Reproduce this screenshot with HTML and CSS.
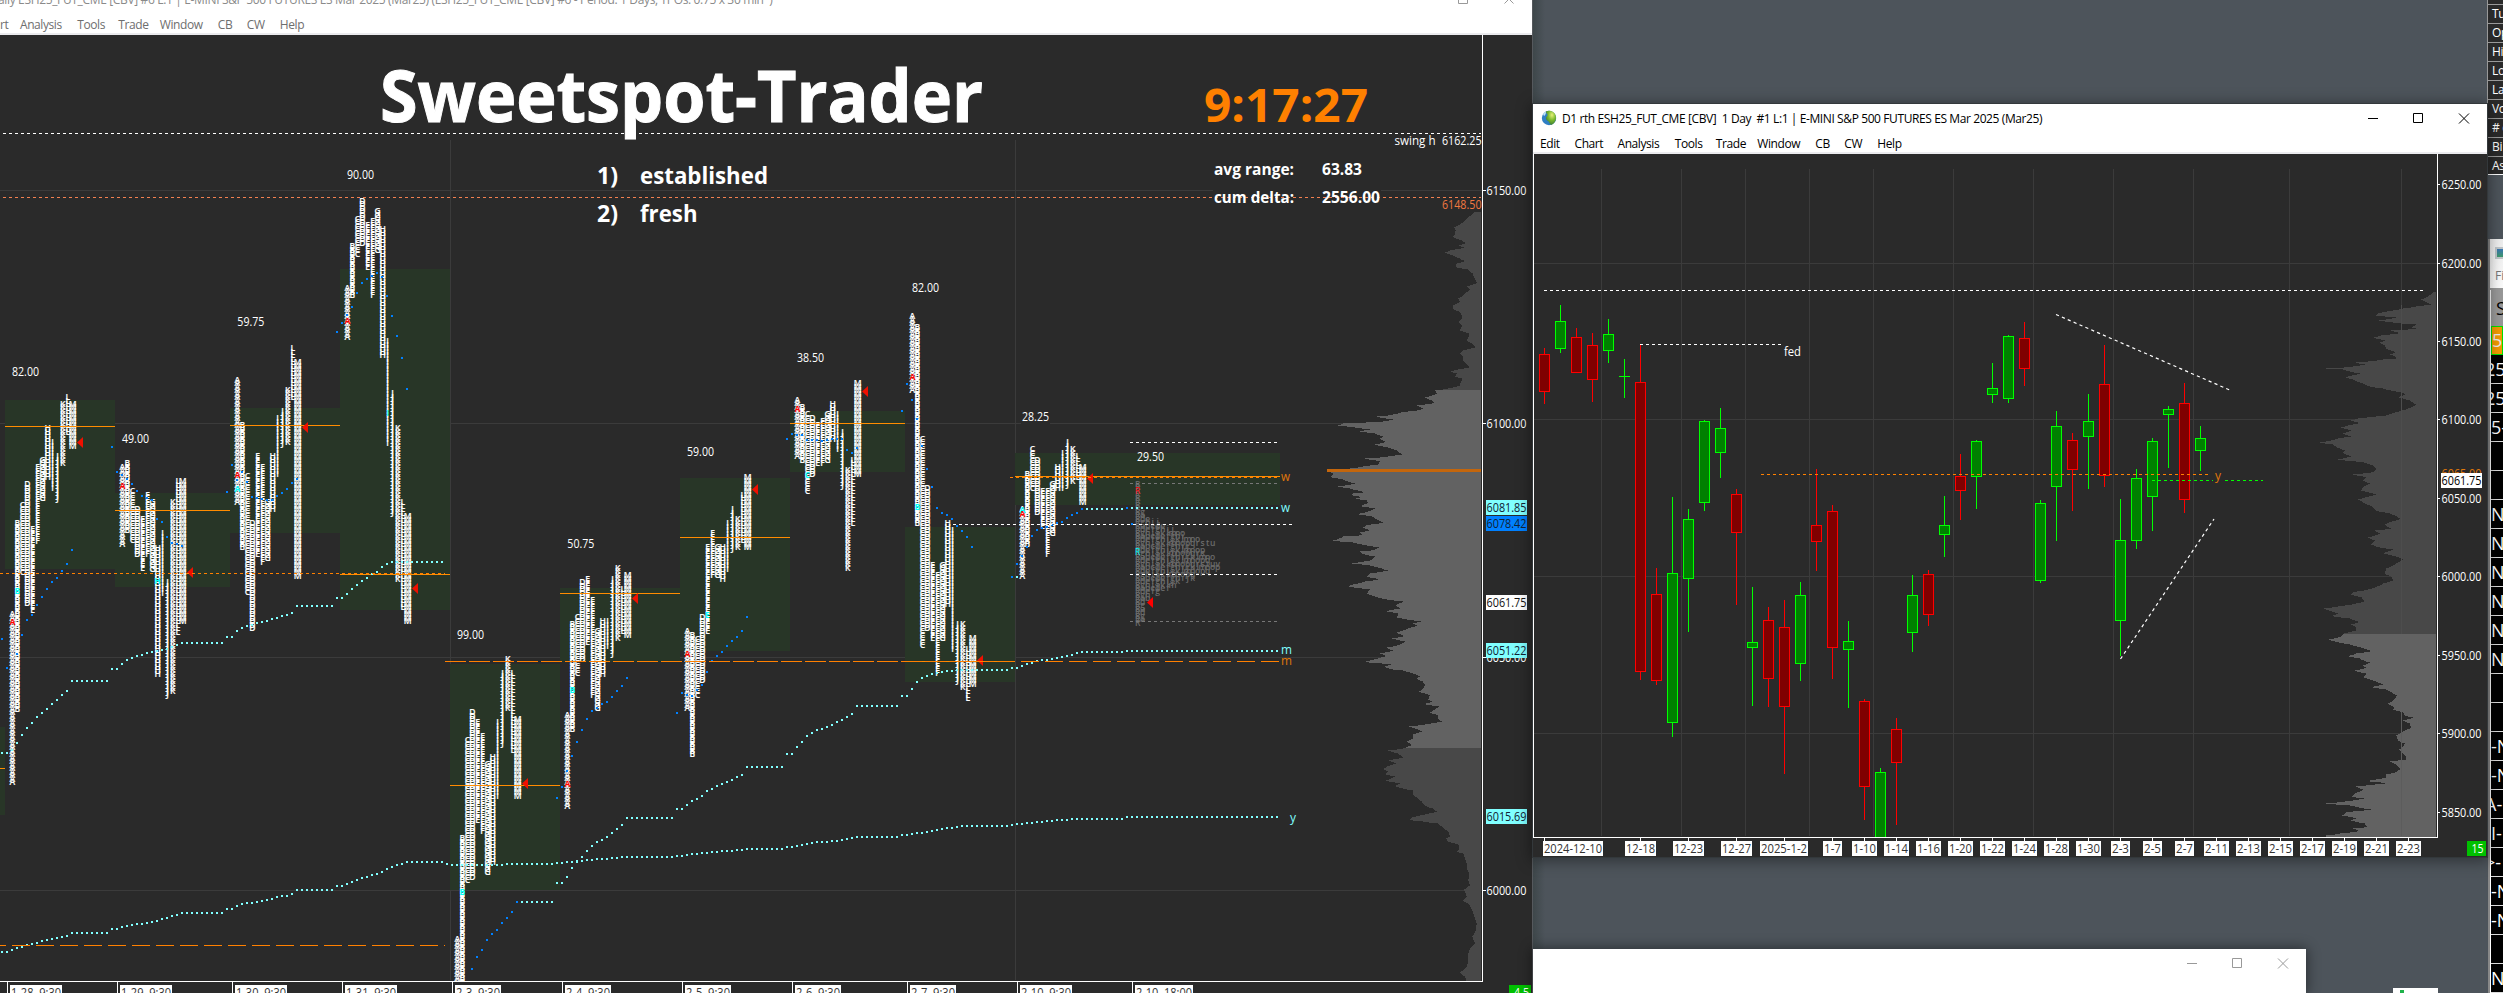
FILE: index.html
```html
<!DOCTYPE html>
<html lang="en">
<head>
<meta charset="utf-8">
<title>Sweetspot-Trader</title>
<link rel="stylesheet" href="styles.css">
</head>
<body>
<main class="desktop">
  <section class="window window-profile">
    <header class="titlebar titlebar-cut">
      <span class="title title-muted">ally ESH25_FUT_CME [CBV] #6 L:1 | E-MINI S&amp;P 500 FUTURES ES Mar 2025 (Mar25) (ESH25_FUT_CME [CBV] #6 - Period: 1 Days, TPOs: 0.75 x 30 min&nbsp; )</span>
      <svg class="controls controls-cut" width="56" height="10" viewBox="0 0 56 10"><path d="M.5 0V9.5H9.5V0M46.5 9.5L51 5 55.500 9.500M51 5L46 0M51 5L56 0"/></svg>
    </header>
    <nav class="menu menu-muted"><span class="m-rt">rt</span><span class="m-analysis">Analysis</span><span class="m-tools">Tools</span><span class="m-trade">Trade</span><span class="m-window">Window</span><span class="m-cb">CB</span><span class="m-cw">CW</span><span>Help</span></nav>
    <svg class="chart" id="profile" width="1532" height="958" viewBox="0 35 1532 958"></svg>
  </section>
  <div class="middle">
    <section class="window window-daily">
      <header class="titlebar">
        <svg class="globe" width="16" height="16" viewBox="0 0 16 16"><defs><radialGradient id="g" cx=".6" cy=".3" r=".8"><stop offset="0" stop-color="#e6f07a"/><stop offset=".45" stop-color="#7dbb2d"/><stop offset="1" stop-color="#2a6a3a"/></radialGradient></defs><circle cx="8" cy="8" r="7.200" fill="#2f7fc4"/><path d="M5 1.500C9-.5 15 2 15 8c0 3-2 6-5 7-2-1-1-3-3-4S4 8 6 6 4 3 5 1.500Z" fill="url(#g)"/><path d="M2 4c1-2 3-2 3-2s0 3-2 4Z" fill="#bfe2f5"/></svg>
        <span class="title">D1 rth ESH25_FUT_CME [CBV]&nbsp; 1 Day&nbsp; #1 L:1 | E-MINI S&amp;P 500 FUTURES ES Mar 2025 (Mar25)</span>
        <svg class="controls" width="102" height="11" viewBox="0 0 102 11"><path d="M0 5.500H10M45.500.5H54.500V9.500H45.500ZM91 .5L101 10.500M101 .5L91 10.500"/></svg>
      </header>
      <nav class="menu menu-daily"><span class="m-edit">Edit</span><span class="m-chart">Chart</span><span class="m-analysis">Analysis</span><span class="m-tools">Tools</span><span class="m-trade">Trade</span><span class="m-window">Window</span><span class="m-cb">CB</span><span class="m-cw">CW</span><span>Help</span></nav>
      <svg class="chart" id="daily" width="954" height="703" viewBox="1533 154 954 703"></svg>
    </section>
    <section class="window window-blank">
      <svg class="controls controls-muted" width="102" height="11" viewBox="0 0 102 11"><path d="M0 5.500H10M45.500.5H54.500V9.500H45.500ZM91 .5L101 10.500M101 .5L91 10.500"/></svg>
    </section>
    <div class="window-peek"><i></i></div>
  </div>
  <aside class="edge">
    <div class="stats"><b>Tu</b><b>Op</b><b>Hi</b><b>Lo</b><b>La</b><b>Vo</b><b># o</b><b>Bi</b><b>As</b></div>
    <div class="list-window">
      <div class="list-head"><i class="list-icon"></i><span>Fi</span></div>
      <div class="list" id="list"></div>
    </div>
  </aside>
</main>
<script src="charts.js"></script>
</body>
</html>
```
FILE: styles.css
```css
* { box-sizing: border-box; }
body { margin: 0; overflow: hidden; background: #4d545b; font-family: "Open Sans", "Noto Sans", sans-serif; font-size: 12px; }
.desktop { display: grid; grid-template-columns: 1533px 954px 16px; width: 2503px; height: 993px; overflow: hidden; background: #4d545b; }
.window { background: #fff; }
.window-profile { height: 993px; border-right: 1px solid #55595d; overflow: hidden; }
.middle { position: relative; display: flex; flex-direction: column; padding-top: 104px; background: linear-gradient(90deg, #3e474a, #4d545b 12px); }
.window-daily { position: relative; width: 954px; height: 753px; box-shadow: 0 0 0 1px #33383b, 0 2px 14px 2px rgba(0, 0, 0, .4); }
.window-blank { display: flex; justify-content: flex-end; width: 773px; height: 44px; margin-top: 92px; padding: 9px 17px 0 0; box-shadow: 0 0 12px 1px rgba(0, 0, 0, .45); }
.window-peek { position: absolute; left: 860px; top: 988px; width: 45px; height: 5px; background: #fff; }
.window-peek i { display: block; width: 4px; height: 3px; margin: 2px 0 0 7px; background: #1fb24a; }

.titlebar { display: flex; align-items: center; height: 30px; padding: 0 17px 0 9px; color: #000; white-space: nowrap; }
.title { font-size: 12px; letter-spacing: -.4px; line-height: 16px; }
.titlebar .title { flex: 1; }
.globe { margin: -2px 5px 0 -1px; }
.titlebar-cut { height: 16px; padding: 0 18px 0 0; align-items: flex-start; }
.title-muted { margin: -8px 0 0 -2px; color: #8a8a8a; letter-spacing: -.35px; }
.controls { fill: none; stroke: #000; stroke-width: 1; margin-top: -2px; }
.controls-muted { stroke: #999; margin-top: 0; }
.controls-cut { stroke: #999; margin-top: -6px; }
.menu { display: flex; height: 20px; padding: 0 0 0 7px; border-bottom: 2px solid #ebebee; line-height: 18px; letter-spacing: -.42px; white-space: nowrap; color: #000; }
.menu-daily { line-height: 20px; }
.menu-muted { height: 19px; padding-left: 0; color: #6e6e6e; line-height: 18px; }
.m-rt { width: 20px; }
.m-edit { width: 34.500px; }
.m-chart { width: 43px; }
.m-analysis { width: 57.300px; }
.m-tools { width: 41px; }
.m-trade { width: 41.500px; }
.m-window { width: 58px; }
.m-cb { width: 29px; }
.m-cw { width: 33px; }
.chart { display: block; background: #2a2a2a; }
.chart text { font-family: "Open Sans", "Noto Sans", sans-serif; }
.chart .tpo { font-size: 8.500px; text-anchor: middle; }
.chart .session { font-weight: 600; stroke: #fff; stroke-width: .15px; }
.chart .headline { stroke: #fff; stroke-width: 1px; }

.edge { display: flex; flex-direction: column; overflow: hidden; }
.stats { height: 176px; margin-bottom: 64px; padding-top: 4px; background: #2a2a2a; border-left: 1px solid #999; border-bottom: 1px solid #fff; overflow: hidden; }
.stats b { display: block; height: 19px; padding-left: 4px; border-top: 1px solid #999; color: #fff; font-weight: 400; line-height: 18px; letter-spacing: -.3px; white-space: nowrap; }
.list-window { flex: 1; margin-left: 1px; background: linear-gradient(#eee, #fff 60px); border-left: 2px solid #888; }
.list-head { height: 51px; padding: 8px 0 0 5px; color: #777; overflow: hidden; margin-left: 0; border-bottom: 2px solid #999; }
.list-head span { display: block; line-height: 16px; margin-top: 9px; }
.list-icon { display: block; width: 16px; height: 12px; border: 2px solid #c0c6c9; background: linear-gradient(#3a76b5, #3f9a6a); }
.list { border-left: 1px solid #fff; background: #000; overflow: hidden; }
.list p { height: 29px; margin: 0; border-bottom: 1px solid #ddd; color: #fff; font-size: 18px; line-height: 28px; white-space: pre; overflow: hidden; }
.list .head { height: 36px; padding-left: 5px; border: 0; background: #999; color: #000; line-height: 36px; }
.list .hot { background: #f59b00; border: 1px solid #00e000; color: #eee; line-height: 27px; }
.list .shift { text-indent: -6px; }
```
FILE: charts.js
```js
// Chart data is stored in thirds of a pixel.
const el = id => document.getElementById(id);
const px = z => Math.floor(z / 3);
const rect = (x, y, w, h, fill, extra = '') => `<rect x="${x}" y="${y}" width="${w}" height="${h}" fill="${fill}" shape-rendering="crispEdges" ${extra}/>`;
const line = (x1, x2, y, color, dash = '') => `<path d="M${x1} ${y + .5}H${x2}" stroke="${color}" shape-rendering="crispEdges" ${dash && `stroke-dasharray="${dash}"`}/>`;
const text = (x, y, w, s, fill = '#fff', size = 12, weight = 400, cls = '') => `<text class="${cls}" x="${x}" y="${y}" ${w ? `textLength="${w}" lengthAdjust="spacingAndGlyphs"` : ''} fill="${fill}" font-size="${size}" font-weight="${weight}" xml:space="preserve">${s}</text>`;

// Stepped histogram that grows leftwards from the right edge.
function histogram(points, right, toX, fillOf) {
  let out = '';
  for (let i = 0; i < points.length - 1; i++) {
    const [y0, a] = points[i], [y1, b] = points[i + 1];
    for (let y = Math.round(y0 / 3); y < Math.round(y1 / 3); y++) {
      const t = (y * 3 - y0) / (y1 - y0);
      const x = Math.round(toX(a + (b - a) * Math.max(0, t)));
      out += rect(x, y, right - x, 1, fillOf(y));
    }
  }
  return out;
}
const pairs = (s, dy) => s.split(' ').map(p => { const [y, x] = p.split(':').map(Number); return [y + dy, x]; });

// ---------- market profile ----------
const G = '#3b3b3b', CY = '#80ffff', BL = '#0080ff', OR = '#ff8c00', ORL = '#ff8000';
// o: origin, va: value area [x0,x1,y0,y1,poc], l: label, x: first column, c: columns A-M, m: marks [col,y,color], a: arrow
const days = [
 {o:[0,0],va:[15,345,1200,1707,1279],l:[36,1127,'82.00'],x:36,c:[[1834,2359],[1561,2134],[1507,1729],[1443,1819],[1579,1841],[1392,1629],[1370,1504],[1275,1443],[1317,1475],[1360,1504],[1202,1400],[1182,1308],[1202,1350]],m:[[0,1866,'r'],[1,1774,'c']],a:[232,1327]},
 {o:[0,0],va:[345,690,1479,1761,1531],l:[366,1328,'49.00'],x:366,c:[[1392,1642],[1380,1601],[1465,1629],[1517,1672],[1547,1716],[1475,1672],[1497,1716],[1634,2029],[1591,1789],[1737,2092],[1497,2084],[1434,1904],[1434,1874]],m:[[0,1459,'r'],[7,1743,'c']],a:[562,1718]},
 {o:[0,0],va:[690,1020,1224,1599,1276],l:[712,977,'59.75'],x:711,c:[[1130,1517],[1265,1652],[1420,1789],[1561,1894],[1360,1672],[1392,1694],[1497,1686],[1360,1539],[1245,1435],[1224,1338],[1160,1338],[1035,1203],[1077,1736]],m:[[0,1426,'r'],[0,1467,'c']],a:[907,1283]},
 {o:[0,0],va:[1020,1350,807,1832,1723],l:[1041,536,'90.00'],x:1041,c:[[855,1022],[730,895],[647,770],[593,742],[665,812],[655,895],[625,762],[678,1077],[1014,1338],[1170,1547],[1275,1747],[1497,1832],[1539,1874]],m:[[0,964,'r'],[8,1240,'c']],a:[1237,1765]},
 {o:[1320,1479],va:[30,360,513,1192,877],l:[51,437,'99.00'],x:51,c:[[1330,1480],[1027,1480],[733,1172],[648,1160],[678,992],[720,1025],[803,1150],[783,1118],[678,920],[530,762],[490,656],[530,783],[668,920]],m:[[1,1198,'c']],a:[247,872]},
 {o:[1320,1479],va:[360,720,285,507,301],l:[382,164,'50.75'],x:381,c:[[658,950],[383,720],[363,550],[258,508],[250,458],[312,613],[405,656],[375,550],[375,467],[250,488],[215,447],[280,425],[237,437]],m:[[0,872,'r'],[1,590,'c']],a:[577,317]},
 {o:[1320,1479],va:[720,1050,-45,476,133],l:[741,-112,'59.00'],x:741,c:[[405,656],[417,795],[428,613],[363,572],[153,425],[112,258],[153,258],[153,270],[82,237],[40,173],[70,173],[-4,153],[-57,173]],m:[[0,483,'r'],[4,365,'c']],a:[937,-11]},
 {o:[2340,900],va:[30,375,333,516,370],l:[51,185,'38.50'],x:51,c:[[290,480],[312,491],[333,583],[345,533],[365,500],[353,500],[333,491],[303,428],[333,458],[387,563],[500,807],[470,682],[240,533]],m:[[0,327,'r'],[2,525,'c']],a:[247,275]},
 {o:[2340,900],va:[375,705,681,1146,1084],l:[396,-23,'82.00'],x:396,c:[[40,280],[72,682],[407,1046],[555,995],[785,1025],[815,1130],[785,1025],[660,920],[682,1057],[963,1150],[963,1172],[1038,1205],[1005,1162]],m:[[0,232,'r'],[1,622,'c']],a:[592,1081]},
 {o:[2340,900],va:[705,1500,461,617,529],l:[726,363,'28.25'],x:726,c:[[618,836],[513,743],[438,573],[470,646],[563,682],[563,773],[543,712],[491,573],[450,573],[418,563],[438,553],[458,543],[491,617]],m:[[0,629,'c'],[0,643,'r']],a:[922,535]}
];
// dotted averages: [dx, dy, color, "x,y ..."]; points are resampled every 15 units
const dots = [
 [0,1479,CY,'6,780 21,780 36,770 51,750 66,726 81,705 96,690 111,672 126,660 201,594 216,564 321,564 336,527 351,527 366,513 381,501 411,489 456,477 501,468 531,456 546,450 666,450 681,432 696,432 711,414 726,405 741,399 786,387 831,375 876,360 891,339 996,339 1011,315 1026,315 1041,303 1056,288 1086,264 1116,243 1131,237 1146,222 1161,213 1176,207 1326,207'],
 [0,1479,CY,'6,1377 21,1377 36,1371 66,1361 96,1353 126,1344 201,1329 216,1320 321,1320 336,1308 351,1308 366,1302 396,1296 456,1287 501,1275 546,1260 666,1260 681,1248 696,1248 711,1239 726,1233 786,1224 846,1209 861,1209 876,1203 891,1191 996,1191 1011,1179 1026,1179 1086,1155 1131,1143 1176,1122 1221,1107 1326,1107 1341,1113 1371,1116 1506,1116 1521,1113 1656,1113'],
 [1320,1479,CY,'351,1110 381,1107 411,1105 441,1101 486,1098 561,1092 696,1092 711,1089 726,1089 756,1083 816,1077 861,1074 921,1068 1026,1068 1041,1062 1056,1062 1131,1047 1191,1044 1251,1032 1371,1032'],
 [2340,900,CY,'366,1605 381,1605 471,1590 546,1578 681,1578 696,1575 801,1563 906,1556 1026,1556 1041,1550 1491,1550'],
 [1320,1479,CY,'246,1227 336,1227'],
 [1320,1479,CY,'351,1170 366,1170 381,1152 396,1125 411,1107 426,1092 441,1074 456,1059 471,1047 501,1032 546,996 561,975 696,975 711,948 726,948 756,924 786,909 801,894 846,873 906,846 921,822 1026,822 1041,783 1056,783 1071,762 1101,729 1131,711 1161,702 1206,681 1236,663 1251,639 1371,639'],
 [2340,900,CY,'366,1188 381,1188 396,1167 411,1146 426,1134 456,1122 501,1113 531,1110 681,1110 696,1104 711,1104 741,1092 771,1083 831,1074 861,1068 906,1056 1026,1056 1041,1053 1491,1053'],
 [2340,900,CY,'711,831 711,831'],[2340,900,CY,'921,627 1026,627'],[2340,900,CY,'1056,624 1491,624'],
 [0,1479,BL,'6,438 6,438'],[0,1479,BL,'21,525 21,525'],
 [0,1479,BL,'51,483 66,426 81,381 96,366 111,336 126,312 141,288 156,267 171,255 186,234 201,213 216,171'],
 [0,0,BL,'336,1341 351,1416 366,1425 381,1436 396,1452 411,1473 426,1488 441,1494 456,1499 471,1557 486,1566 501,1611 516,1629 531,1632 546,1638'],
 [0,0,BL,'681,1476 696,1395 711,1440 726,1415 741,1447 756,1491 801,1501 816,1499 831,1488 846,1479 861,1467 876,1449 891,1437'],
 [0,0,BL,'1011,996 1026,969 1041,945 1056,921 1071,879 1086,849 1101,837 1116,828 1131,819 1146,830 1161,888 1176,948 1191,1008 1206,1074 1221,1167'],
 [1320,1479,BL,'96,1428 111,1392 126,1371 141,1341 156,1323 171,1311 186,1290 201,1275 216,1257 231,1227'],
 [1320,1479,BL,'351,915 366,882 381,835 396,789 411,747 426,711 441,678 456,654 471,645 486,633 501,627 516,612 531,594 546,579 561,555'],
 [1320,1479,BL,'711,660 726,600 756,610 771,592 786,576 801,537 816,504 831,489 846,477 861,459 876,444 891,432 906,414 921,372'],
 [2340,900,BL,'21,417 36,402 66,405 81,420 126,422 156,417 186,417 201,450 216,459 231,444'],
 [2340,900,BL,'366,333 381,252 396,300 411,357 426,438 441,507 456,561 471,624 486,639 501,645 516,657 531,678 546,693 561,711 576,741'],
 [2340,900,BL,'696,831 711,792 741,741 756,708 771,690 786,684 801,682 831,670 846,666 861,654 876,645 891,639 906,627'],
 [2340,900,BL,'1041,624 1056,672']
];
const volume = pairs('636:1062 645:1052 655:1040 665:1030 672:1020 680:1002 690:1007 705:1003 710:998 720:1025 728:1038 735:1018 742:1032 750:990 757:975 765:1000 775:1020 782:1035 790:1010 800:1006 808:1045 820:1058 835:1065 848:1071 858:1040 868:1050 875:1040 885:1030 895:1015 905:1020 915:1000 925:998 935:1020 945:1025 955:1025 965:1015 975:1027 990:1020 1000:1048 1010:1045 1020:1040 1030:1055 1040:1068 1050:1030 1060:1020 1070:1030 1080:1028 1090:1038 1100:1050 1108:1015 1112:990 1120:1010 1128:1005 1135:1027 1145:1022 1155:1020 1165:985 1170:945 1180:950 1187:930 1192:915 1200:935 1208:945 1215:890 1225:910 1230:890 1235:845 1243:820 1249:770 1258:820 1263:790 1270:670 1275:655 1280:700 1288:750 1292:715 1300:765 1308:790 1315:780 1325:797 1333:765 1340:800 1350:830 1362:846 1370:790 1375:735 1382:780 1392:775 1397:735 1405:690 1410:622 1420:640 1430:630 1436:665 1445:690 1450:705 1458:655 1465:690 1475:735 1483:695 1490:725', 0)
 .concat(pairs('0:700 5:693 10:730 15:707 22:740 28:745 38:720 45:765 55:745 62:708 68:755 75:765 80:775 88:790 95:740 103:730 110:750 118:720 125:730 130:670 142:640 148:700 155:735 162:778 170:760 175:720 182:730 190:765 200:755 210:695 215:745 225:785 232:803 240:750 250:740 257:780 265:735 275:690 280:687 288:750 300:740 310:765 318:800 325:850 335:825 345:840 353:795 360:835 372:830 380:870 383:908 390:880 397:890 405:865 418:830 428:855 435:817 445:855 455:835 463:800 472:820 480:780 488:800 497:765 506:732 512:815 520:795 527:810 532:850 540:880 548:900 555:890 565:908 575:915 585:910 595:897 605:930 618:925 625:937 632:912 640:958 650:940 658:930 665:955 675:955 685:965 692:920 700:868 708:895 715:905 722:880 735:878 745:862 755:875 765:850 772:804 780:835 793:850 800:805 810:828 820:800 827:790 835:805 842:795 850:825 862:797 870:840 878:825 885:848 892:878 905:880 915:895 925:905 940:920 945:940 955:950 965:905 972:875 980:870 985:910 990:955 1000:965 1015:985 1030:990 1035:978 1045:985 1052:1015 1065:1018 1075:1010 1080:1030 1095:1035 1110:1040 1125:1040 1140:1048 1160:1045 1175:1050 1190:1030 1195:1035 1210:1040 1222:1028 1230:1045 1250:1057 1275:1065 1290:1070 1310:1067 1330:1057 1350:1065 1365:1050 1380:1045 1400:1045 1420:1040 1438:1020 1450:1035 1465:1040', 1479));

function drawProfile() {
  let s = '';
  for (const y of [190, 423, 657, 890]) s += line(0, 1482, y, G);
  for (const x of [450, 1015]) s += rect(x, 140, 1, 840, G);
  s += rect(0, 727, 5, 88, '#283627') + line(0, 5, 768, OR);
  for (const d of days) {
    const [dx, dy] = d.o, [x0, x1, y0, y1] = d.va;
    s += rect(px(x0 + dx), px(y0 + dy), px(x1 + dx) - px(x0 + dx), px(y1 + dy) - px(y0 + dy), '#283627');
  }
  // columns of period letters
  for (const d of days) {
    const [dx, dy] = d.o;
    d.c.forEach(([top, bottom], i) => {
      const x = (d.x + i * 15.1 + dx + 1) / 3, ch = 'ABCDEFGHIJKLM'[i];
      const first = (top + dy) / 3 + 6, last = (bottom + dy) / 3;
      const n = Math.max(1, Math.round((last - first) / 3.5) + 1), ys = [];
      for (let k = 0; k < n; k++) ys.push((first + k * 3.5).toFixed(1));
      s += `<text class="tpo session" fill="#fff" x="${ys.map(() => x.toFixed(1)).join(' ')}" y="${ys.join(' ')}">${ch.repeat(n)}</text>`;
    });
    for (const [c, y, k] of d.m) s += `<text class="tpo" font-weight="700" fill="${k === 'r' ? '#f00' : '#00ffff'}" x="${(d.x + c * 15.1 + dx + 1) / 3}" y="${(y + dy) / 3 + 3}">${'ABCDEFGHIJKLM'[c]}</text>`;
  }
  // overnight session, collapsed rows
  const widths = [1,1,1,1,1,1,1,1,2,2,3,5,6,8,10,10,13,16,11,14,14,16,15,17,17,15,12,12,9,8,7,5,3,3,2,2,2,2,2,2,1];
  const seq = 'RabcdefghijklmnopqrstuvwxNOPQSTUVWX';
  widths.forEach((n, i) => {
    const y = (1455 + i * 10.4) / 3 + 2;
    const chars = 'R' + seq.slice(1 + (i * 3) % 9, (i * 3) % 9 + n);
    s += `<text class="tpo" font-weight="600" fill="#6a6a6a" x="${[...chars].map((_, k) => (3413 + k * 15) / 3).join(' ')}" y="${y}">${chars}</text>`;
  });
  s += `<text class="tpo" fill="#f00" x="1137.500" y="494">R</text><text class="tpo" fill="#0ff" x="1137.500" y="555">R</text>`;
  for (const d of days) {
    const [dx, dy] = d.o, [x0, x1, , , p] = d.va;
    s += line(px(x0 + dx), px(x1 + dx), px(p + dy), OR);
  }
  for (const [dx, dy, color, data] of dots) {
    const pts = data.split(' ').map(p => p.split(',').map(Number));
    for (let x = pts[0][0]; x <= pts[pts.length - 1][0]; x += 15) {
      let i = 0;
      while (i < pts.length - 2 && pts[i + 1][0] < x) i++;
      const [xa, ya] = pts[i], [xb, yb] = pts[i + 1];
      const y = xb === xa ? ya : ya + (yb - ya) * (x - xa) / (xb - xa);
      s += rect(Math.round((x + dx) / 3) - 1, Math.round((y + dy) / 3) - 1, 2, 2, color);
    }
  }
  for (const d of days) {
    const [dx, dy] = d.o, ax = px(d.a[0] + dx), ay = px(d.a[1] + dy);
    s += `<path d="M${ax} ${ay + .5}l6-5.500v11z" fill="#f01000"/>`;
  }
  s += `<path d="M1147 602.500l6-5.500v11z" fill="red"/>`;
  // horizontal levels
  s += line(3, 1481, 133, '#fff', '3 3') + line(3, 1481, 197, '#f28050', '3 3');
  s += line(0, 445, 573, ORL, '3 3') + line(-12, 445, 945, ORL, '18 6');
  s += line(445, 1015, 661, ORL, '21 3') + line(1021, 1279, 661, ORL, '18 6') + line(1010, 1280, 477, ORL, '3 3');
  s += line(1130, 1277, 442, '#fff', '3 3') + line(953, 1292, 524, '#fff', '3 3') + line(1130, 1277, 574, '#fff', '3 3');
  s += line(1130, 1277, 483, '#777', '3 3') + line(1130, 1277, 621, '#777', '3 3');
  s += text(1281, 480.5, 9, 'w', '#e0780a', 13) + text(1281, 511.5, 9, 'w', CY, 13) + text(1281, 654, 11, 'm', CY, 13) + text(1281, 664.5, 11, 'm', '#e0780a', 13) + text(1290, 821.5, 6, 'y', CY, 13);
  s += rect(1021, 410, 29, 16, '#2a2a2a');
  for (const d of days) s += text((d.l[0] + d.o[0]) / 3, (d.l[1] + d.o[1]) / 3, 27, d.l[2]);
  s += text(1137, 460.5, 27, '29.50');
  // volume at price
  s += histogram(volume, 1481, x => 1120 + x / 3, y => y >= 390 && y < 748 ? '#626262' : '#484848');
  s += rect(1327, 469, 154, 3, '#c4660c');
  // headline block
  s += text(380, 121.7, 603, 'Sweetspot-Trader', '#fff', 71, 700, 'headline');
  s += text(1204, 122, 164, '9:17:27', '#ff8000', 47, 700);
  s += text(597, 184, 21, '1)', '#fff', 24, 700) + text(640, 184, 128, 'established', '#fff', 24, 700);
  s += text(597, 222, 21, '2)', '#fff', 24, 700) + text(640, 222, 57.5, 'fresh', '#fff', 24, 700);
  s += rect(1213, 190, 168, 1, '#2a2a2a');
  s += text(1214, 175, 80, 'avg range:', '#fff', 15.5, 700) + text(1322, 175, 40, '63.83', '#fff', 15.5, 700);
  s += text(1214, 203, 80, 'cum delta:', '#fff', 15.5, 700) + text(1322, 203, 58, '2556.00', '#fff', 15.5, 700);
  s += text(1394.5, 145, 41, 'swing h') + text(1442, 145, 39.5, '6162.25') + text(1442, 209, 39.5, '6148.50', '#f07840');
  // axes
  s += rect(1482, 35, 50, 958, '#2a2a2a') + rect(0, 982, 1532, 11, '#2a2a2a');
  s += rect(1482, 35, 1, 947, '#fff') + rect(0, 981, 1483, 1, '#fff');
  for (const [y, t] of [[190, '6150.00'], [423, '6100.00'], [657, '6050.00'], [890, '6000.00']]) s += rect(1483, y, 3, 1, '#fff') + text(1486.5, y + 4.7, 40, t);
  for (const [y, t, bg, fg] of [[500, '6081.85', CY, '#123'], [516, '6078.42', BL, '#123'], [595, '6061.75', '#fff', '#111'], [643, '6051.22', CY, '#123'], [809, '6015.69', CY, '#123']])
    s += rect(1486, y, 41, 15, bg) + text(1486.5, y + 12, 40, t, fg);
  [[22,'1-28  9:30',52],[352,'1-29  9:30',52],[697,'1-30  9:30',52],[1027,'1-31  9:30',52],[1357,'2-3  9:30',46],[1687,'2-4  9:30',46],[2047,'2-5  9:30',46],[2377,'2-6  9:30',46],[2722,'2-7  9:30',46],[3052,'2-10  9:30',52],[3397,'2-10  18:00',58]].forEach(([z, t, w]) => {
    const x = px(z);
    s += rect(x, 982, 1, 11, '#fff') + rect(x + 3, 985, w, 8, '#fff') + text(x + 4, 996.5, w - 2, t, '#333');
  });
  s += rect(1509, 985, 22, 8, '#00c000') + text(1514, 996.5, 15, '4.5');
  el('profile').innerHTML = s;
}

// ---------- daily candles ----------
const candles = [
 'r 774 793 905 941','g 645 693 776 786','r 714 742 848 848','r 729 766 869 933','g 687 733 782 816','g 807 859 859 921','r 764 877 1745 1767','r 1434 1513 1772 1782','g 1221 1450 1898 1938','g 1257 1288 1466 1623','g 990 994 1236 1260','g 954 1015 1088 1161','r 1197 1213 1328 1542','g 1491 1657 1673 1845','r 1551 1591 1766 1848','r 1530 1612 1850 2049','g 1476 1516 1721 1770','r 1137 1306 1355 1440','r 1245 1264 1673 1764','g 1593 1654 1679 1852','r 1827 1834 2090 2187','g 2034 2047 2245 2245','r 1884 1918 2018 2202','g 1455 1516 1628 1683','r 1440 1453 1574 1605','g 1218 1306 1334 1398','r 1092 1159 1202 1287','g 1050 1054 1160 1254','g 819 895 914 936','g 735 739 926 936','r 696 745 836 885','g 1230 1240 1472 1476','g 963 1009 1190 1350','r 1029 1051 1139 1260','g 912 994 1040 1195','r 765 883 1157 1188','g 1227 1351 1592 1695','g 1137 1165 1352 1374','g 1044 1054 1220 1320','g 948 958 974 1131','r 879 940 1229 1266','g 1008 1045 1082 1140'];
const dailyVolume = pairs('605:1290 612:1285 620:1270 628:1255 635:1270 642:1283 648:1240 655:1200 660:1170 668:1125 675:1120 682:1180 690:1128 697:1170 703:1240 710:1225 715:1240 721:1165 728:1195 735:1135 742:1112 750:1145 757:1130 765:1145 775:1150 785:1180 792:1160 797:1175 805:1180 808:1140 817:1060 823:1085 830:1035 835:970 838:1020 845:1050 850:1070 860:1025 868:1050 880:1080 888:1100 895:1140 905:1190 911:1210 920:1185 930:1220 943:1240 955:1215 965:1180 975:1150 980:1100 985:1065 990:1045 998:1070 1005:1035 1012:1015 1020:1045 1030:1020 1038:1045 1043:1010 1050:985 1057:950 1062:990 1070:1000 1080:1025 1088:1020 1098:1045 1108:1005 1115:1080 1125:1110 1135:1120 1145:1110 1153:1050 1160:1090 1170:1080 1180:1100 1190:1080', 270)
 .concat(pairs('30:1075 42:1120 57:1065 68:1085 80:1110 92:1120 98:1160 110:1185 116:1193 125:1160 133:1145 145:1165 150:1115 160:1130 172:1095 180:1115 192:1105 200:1125 208:1170 218:1140 228:1180 236:1200 250:1180 265:1150 280:1145 288:1165 300:1170 310:1140 322:1115 328:1095 335:1050 343:1045 350:1075 362:1085 370:1060 375:1025 385:962 392:985 400:1005 407:985 415:1040 425:1070 432:1045 440:1060 450:1060 458:1025 462:1020 468:1015 478:977 485:1005 493:1040 500:1070 512:1108 520:1060 527:1033 535:1070 547:1100 555:1080 562:1090 571:1055 580:1090 590:1080 600:1110 612:1140 620:1105 628:1150 645:1183 660:1170 670:1155 680:1175 688:1170 695:1200 705:1205 712:1230 720:1200 730:1220 742:1225 750:1205 765:1180 780:1185 790:1205 800:1200 807:1188 818:1200 828:1210 838:1210 842:1160 852:1180 865:1192 875:1180 883:1150 892:1150 902:1090 908:1155 918:1060 928:1080 940:1055 950:1045 953:1090 960:1050 970:970 975:1040 988:1103 995:1030 1005:1018 1013:1060 1020:1045 1030:1085 1040:1095 1044:1050 1052:1070 1060:1010 1066:970 1072:970', 1440));

function drawDaily() {
  let s = '';
  for (const y of [263, 419, 576, 733]) s += line(1533, 2437, y, G);
  const verticals = [1601, 1681, 1745, 1809, 1873, 1953, 2033, 2113, 2193, 2289, 2401];
  for (const x of verticals) s += rect(x, 169, 1, 667, G);
  s += histogram(dailyVolume, 2436, x => 2003 + x / 3, y => y >= 634 ? '#626262' : '#484848');
  s += rect(2401, 305, 1, 329, '#4d4d4d') + rect(2401, 712, 1, 124, '#5c5c5c');
  candles.forEach((c, k) => {
    const [t, h, a, b, l] = c.split(' ').map((v, i) => i ? 90 + Math.floor(v / 3) : v);
    const x = 1544 + 16 * k, edge = t === 'r' ? '#f00' : '#0f0';
    s += rect(x, h, 1, l - h + 1, edge) + rect(x - 5, a, 11, b - a + 1, edge);
    if (b - a > 1) s += rect(x - 4, a + 1, 9, b - a - 1, t === 'r' ? '#800000' : '#008000');
  });
  s += line(1544, 2423, 290, '#fff', '3 3') + line(1640, 1781, 344, '#fff', '3 3');
  s += line(1761, 2209, 474, ORL, '3 3');
  s += line(2152, 2213, 480, '#0f0', '3 3') + line(2225, 2263, 480, '#0f0', '3 3');
  s += `<path d="M2056 314.500L2232 391M2120.500 659L2214 519" stroke="#fff" stroke-width="1.200" stroke-dasharray="3.200 3.200"/>`;
  s += text(1784, 356, 17, 'fed', '#fff', 13) + text(2215, 479.5, 6, 'y', '#e0780a', 13);
  // axes
  s += rect(2438, 154, 49, 703, '#2a2a2a') + rect(1533, 838, 954, 19, '#2a2a2a');
  s += rect(2437, 154, 1, 684, '#fff') + rect(1533, 837, 905, 1, '#fff') + rect(1533, 154, 1, 684, '#fff');
  [184, 263, 341, 419, 498, 576, 655, 733, 812].forEach((y, i) => { s += rect(2438, y, 2, 1, '#fff') + text(2441.5, y + 4.7, 40, (6250 - i * 50) + '.00'); });
  s += text(2441.5, 478, 40, '6065.00', '#e0780a') + rect(2441, 473, 41, 15, '#fff') + text(2441.5, 485, 40, '6061.75', '#000');
  [[1543,1603,'2024-12-10',1544],[1625,1656,'12-18'],[1673,1704,'12-23'],[1721,1752,'12-27'],[1760,1808,'2025-1-2'],[1823,1842,'1-7'],[1852,1877,'1-10'],[1884,1909,'1-14'],[1916,1941,'1-16'],[1948,1973,'1-20'],[1980,2005,'1-22'],[2012,2037,'1-24'],[2044,2069,'1-28'],[2076,2101,'1-30'],[2111,2130,'2-3'],[2143,2162,'2-5'],[2175,2194,'2-7'],[2204,2229,'2-11'],[2236,2261,'2-13'],[2268,2293,'2-15'],[2300,2325,'2-17'],[2332,2357,'2-19'],[2364,2389,'2-21'],[2396,2421,'2-23']].forEach(([a, b, t, tick]) => {
    s += rect(tick || Math.floor((a + b) / 2), 838, 1, 3, '#fff') + rect(a, 841, b - a, 15, '#fff') + text(a + 1, 853, b - a - 2, t, '#333');
  });
  s += rect(2467, 841, 19, 15, '#00c000') + text(2471.5, 853, 12, '15');
  el('daily').innerHTML = s;
}

drawProfile();
drawDaily();
el('list').innerHTML = [['S', 'head'], ['5-', 'hot'], ['25', 'shift'], ['25', 'shift'], ['5-'], [''], [''], ['N'], ['N'], ['N'], ['N'], ['N'], ['N'], [''], [''], ['-N'], ['-N'], ['A-', 'shift'], ['I-'], ['>-', 'shift'], ['-N'], ['-N'], [''], ['N']]
  .map(([t, c]) => `<p class="${c || ''}">${t.replace('>', '&gt;')}</p>`).join('');
```
